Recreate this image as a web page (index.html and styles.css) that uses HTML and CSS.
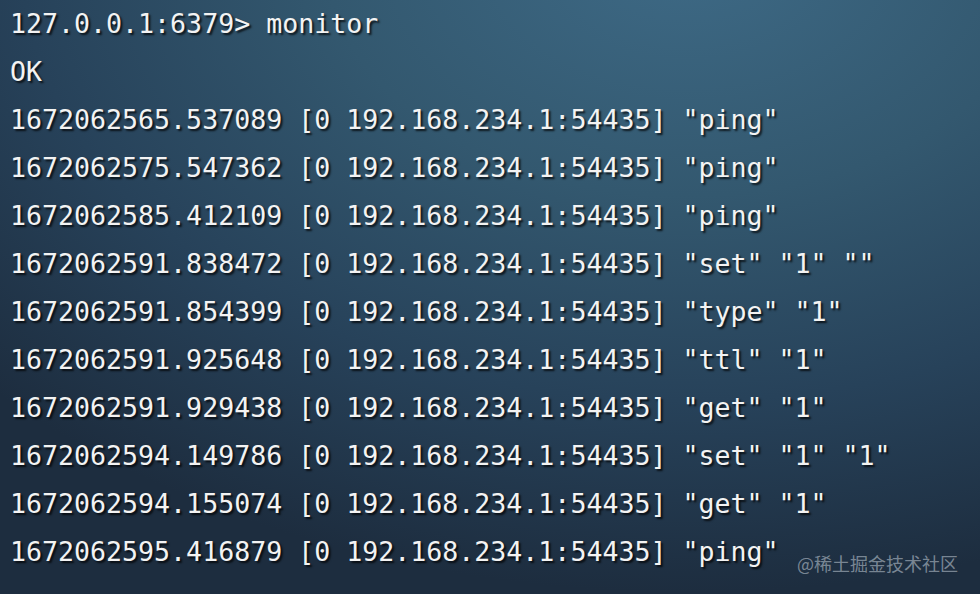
FILE: index.html
```html
<!DOCTYPE html>
<html lang="zh">
<head>
<meta charset="utf-8">
<title>redis monitor</title>
<link rel="stylesheet" href="styles.css">
</head>
<body>
<main class="term">
<div class="line">127.0.0.1:6379&gt; monitor</div>
<div class="line">OK</div>
<div class="line">1672062565.537089 [0 192.168.234.1:54435] "ping"</div>
<div class="line">1672062575.547362 [0 192.168.234.1:54435] "ping"</div>
<div class="line">1672062585.412109 [0 192.168.234.1:54435] "ping"</div>
<div class="line">1672062591.838472 [0 192.168.234.1:54435] "set" "1" ""</div>
<div class="line">1672062591.854399 [0 192.168.234.1:54435] "type" "1"</div>
<div class="line">1672062591.925648 [0 192.168.234.1:54435] "ttl" "1"</div>
<div class="line">1672062591.929438 [0 192.168.234.1:54435] "get" "1"</div>
<div class="line">1672062594.149786 [0 192.168.234.1:54435] "set" "1" "1"</div>
<div class="line">1672062594.155074 [0 192.168.234.1:54435] "get" "1"</div>
<div class="line">1672062595.416879 [0 192.168.234.1:54435] "ping"</div>
</main>
<div class="watermark">@稀土掘金技术社区</div>
</body>
</html>
```
FILE: styles.css
```css
html, body {
  margin: 0;
  padding: 0;
  width: 980px;
  height: 594px;
  overflow: hidden;
}
body {
  position: relative;
  background:
    radial-gradient(ellipse 950px 640px at 70% -8%, #3e6a86 0%, #33586f 38%, #27425a 70%, #1d2d3f 100%);
  background-color: #1e2e40;
}
.term {
  padding: 0 0 0 10px;
  font-family: "DejaVu Sans Mono", "Liberation Mono", monospace;
  font-size: 26.6px;
  line-height: 48px;
  color: #f3f3f3;
  text-shadow: 2px 2px 2px rgba(0, 0, 0, 0.75);
}
.line {
  white-space: pre;
  height: 48px;
}
.watermark {
  position: absolute;
  right: 22px;
  bottom: 20px;
  font-family: "Noto Sans CJK SC", "Noto Sans", sans-serif;
  font-size: 18px;
  line-height: 22px;
  color: rgba(200, 210, 220, 0.55);
}
```
